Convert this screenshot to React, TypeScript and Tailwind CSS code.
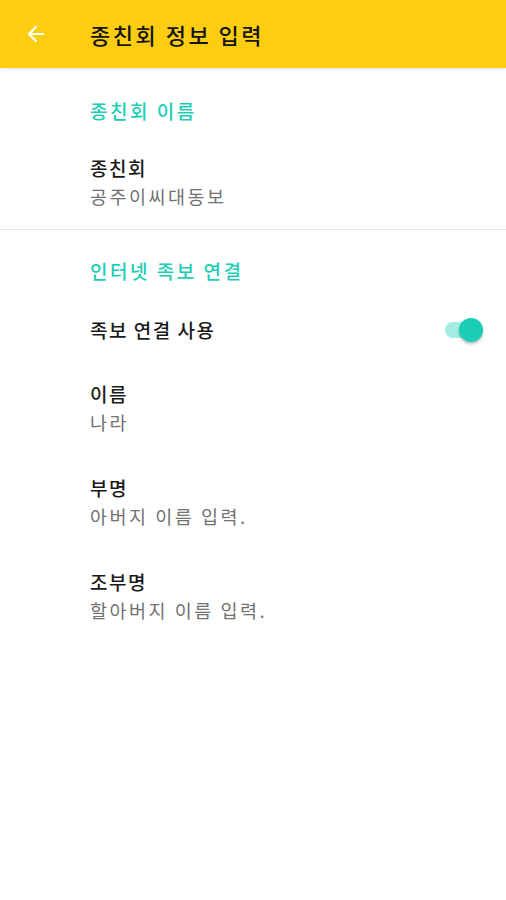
import { ArrowLeft } from "lucide-react";

const font = { fontFamily: '"Noto Sans CJK KR", "Noto Sans", sans-serif' };

const Item = ({ title, value }: { title: string; value: string }) => (
  <div className="pl-[90px] py-[19px]">
    <div className="text-[19px] leading-[28px] font-medium tracking-[1.5px] text-[#1a1a1a]">{title}</div>
    <div className="text-[18.5px] leading-[28px] tracking-[2.5px] text-[#727272]">{value}</div>
  </div>
);

export default function App() {
  return (
    <div className="w-[506px] h-[900px] bg-white flex flex-col" style={font}>
      {/* App bar */}
      <header className="h-[68px] bg-[#fdcd11] flex items-center shadow-[0_1px_3px_rgba(0,0,0,0.12)]">
        <div className="w-[90px] pl-[24px] flex items-center">
          <ArrowLeft size={24} strokeWidth={2.2} className="text-white" />
        </div>
        <h1 className="text-[22px] font-medium tracking-[2.5px] text-[#141414]">종친회 정보 입력</h1>
      </header>

      {/* Section: name */}
      <div className="pl-[90px] pt-[30px] pb-[11px] text-[19px] leading-[26px] tracking-[2.5px] text-[#1ccdb6] font-medium">
        종친회 이름
      </div>
      <Item title="종친회" value="공주이씨대동보" />
      <div className="h-px bg-[#e3e3e3]" />

      {/* Section: internet genealogy */}
      <div className="pl-[90px] pt-[28px] pb-[15px] text-[19px] leading-[26px] tracking-[2.5px] text-[#1ccdb6] font-medium">
        인터넷 족보 연결
      </div>
      <div className="h-[62px] pl-[90px] pr-[27px] flex items-center justify-between">
        <span className="text-[19px] font-medium tracking-[1.5px] text-[#1a1a1a]">족보 연결 사용</span>
        <div className="relative w-[34px] h-[16px] rounded-full bg-[#a4ede2]">
          <div className="absolute right-[-4px] top-[-4px] w-[24px] h-[24px] rounded-full bg-[#1ccdb6] shadow-[0_2px_3px_rgba(0,0,0,0.25)]" />
        </div>
      </div>
      <Item title="이름" value="나라" />
      <Item title="부명" value="아버지 이름 입력." />
      <Item title="조부명" value="할아버지 이름 입력." />
    </div>
  );
}
